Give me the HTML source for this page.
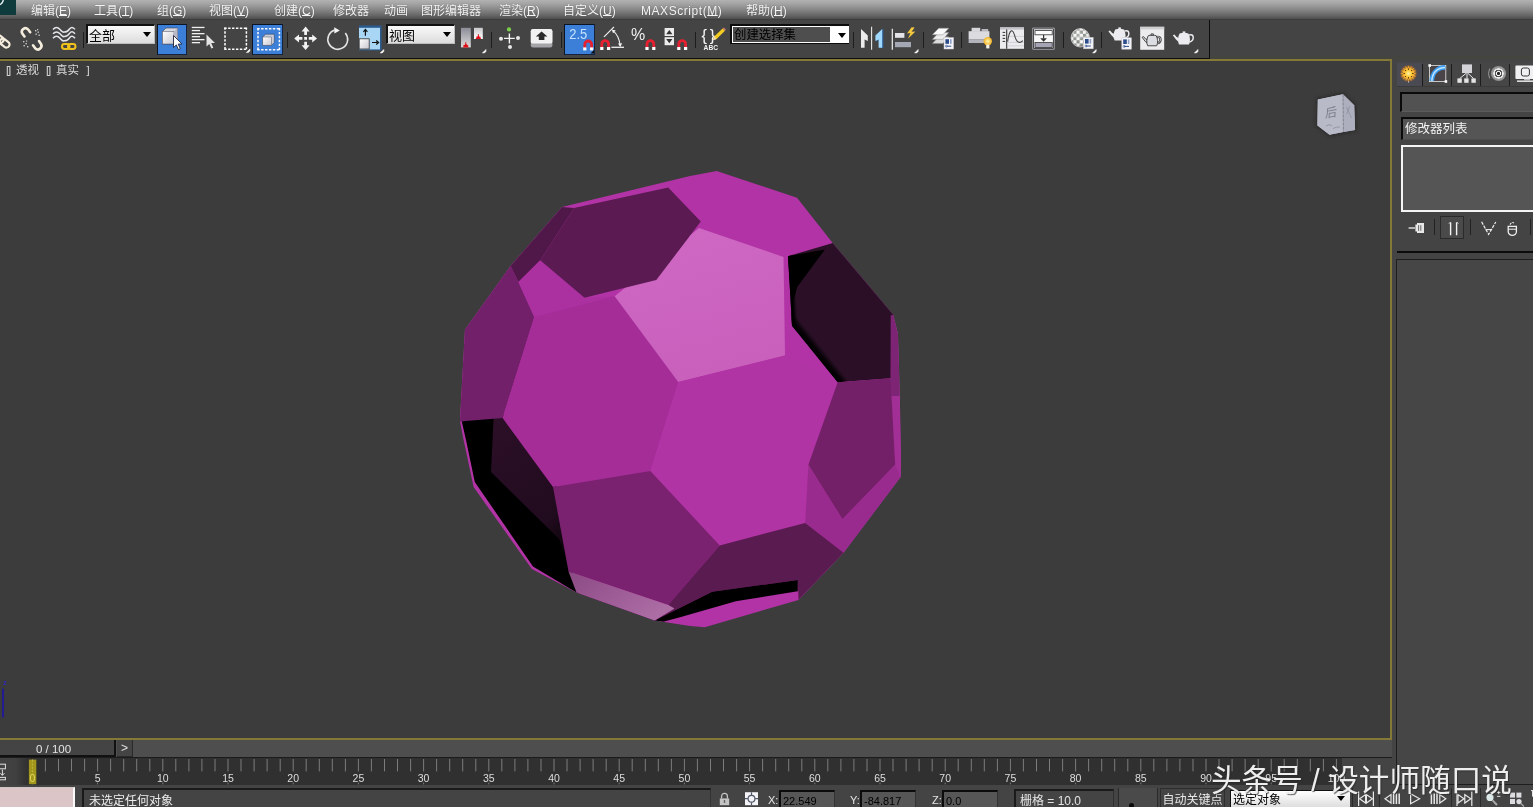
<!DOCTYPE html>
<html lang="zh-CN">
<head>
<meta charset="utf-8">
<title>3ds Max</title>
<style>
*{box-sizing:border-box;margin:0;padding:0}
html{width:1533px;height:807px;overflow:hidden;background:#444444}
body{width:1533px;height:807px;overflow:hidden;background:transparent;will-change:transform}
body{position:relative;font-family:"Liberation Sans","Noto Sans CJK SC",sans-serif;font-size:12px;color:#e6e6e6}
.abs{position:absolute}
#menubar{left:0;top:0;width:1533px;height:20px;background:linear-gradient(#b2b2b2 0%,#a2a2a2 22%,#858585 52%,#656565 82%,#4e4e4e 100%);border-bottom:1px solid #3c3c3c}
#menubar span{position:absolute;top:1px;line-height:21px;font-size:12px;color:#f4f4f4;white-space:nowrap;text-shadow:0 0 1px rgba(60,60,60,.6)}
#menubar u{text-decoration:underline;text-underline-offset:0px}
#logo{left:0;top:0;width:16px;height:15px;background:#0f3b3d;overflow:hidden}
#toolbar{left:0;top:20px;width:1210px;height:39px;background:#444444;border-right:1px solid #0e0e0e;border-bottom:1px solid #0e0e0e}
#tbline{left:1210px;top:56px;width:323px;height:3px;background:#454540}
#viewport{left:-2px;top:59px;width:1394px;height:681px;background:#3c3c3c;border:2px solid #847936}
.vplabel{left:0;top:62px;font-size:11.5px;line-height:16px;color:#d8d8d8;white-space:nowrap}
.vplabel span{position:absolute;top:0;white-space:nowrap}
.sep{position:absolute;width:1px;background:#1e1e1e;top:29px;height:24px}
.dd{position:absolute;height:20px;background:#f2f2f2;border-top:2px solid #111;border-left:2px solid #111;border-bottom:1px solid #bdbdbd;border-right:1px solid #bdbdbd;color:#000;font-size:13px;line-height:19px;padding-left:1px;white-space:nowrap;overflow:hidden}
.dd i{position:absolute;right:3px;top:6px;width:0;height:0;border-left:4px solid transparent;border-right:4px solid transparent;border-top:5px solid #000}
.bluebtn{position:absolute;background:#3c7fd8;border:1px solid #15233c;border-top-color:#0c1422;border-left-color:#0c1422}
svg{position:absolute;overflow:visible}
</style>
</head>
<body>
<!-- MENUBAR -->
<div id="menubar" class="abs">
<span style="left:31px">编辑(<u>E</u>)</span>
<span style="left:94px">工具(<u>T</u>)</span>
<span style="left:157px">组(<u>G</u>)</span>
<span style="left:209px">视图(<u>V</u>)</span>
<span style="left:274px">创建(<u>C</u>)</span>
<span style="left:333px">修改器</span>
<span style="left:384px">动画</span>
<span style="left:421px">图形编辑器</span>
<span style="left:499px">渲染(<u>R</u>)</span>
<span style="left:563px">自定义(<u>U</u>)</span>
<span style="left:641px;letter-spacing:.55px">MAXScript(<u>M</u>)</span>
<span style="left:746px">帮助(<u>H</u>)</span>
</div>
<div id="logo" class="abs"><svg width="16" height="15" viewBox="0 0 16 15" style="left:0;top:0"><path d="M-2 5 Q2.4 5 3.6 -1" fill="none" stroke="#e8f4f4" stroke-width="1.3"/></svg></div>
<!-- TOOLBAR -->
<div id="toolbar" class="abs"></div>
<div id="tbline" class="abs"></div>
<!--TOOLBAR-ICONS-->
<div class="sep" style="left:83px;top:32px;height:16px"></div>
<div class="sep" style="left:287px;top:32px;height:16px"></div>
<div class="sep" style="left:491px;top:32px;height:16px"></div>
<div class="sep" style="left:561px;top:32px;height:16px"></div>
<div class="sep" style="left:695px;top:32px;height:16px"></div>
<div class="sep" style="left:853px;top:32px;height:16px"></div>
<div class="sep" style="left:923px;top:32px;height:16px"></div>
<div class="sep" style="left:961px;top:32px;height:16px"></div>
<div class="sep" style="left:1063px;top:32px;height:16px"></div>
<div class="sep" style="left:1101px;top:32px;height:16px"></div>
<div class="dd" style="left:86px;top:24px;width:69px;background:linear-gradient(#fafafa,#dcdcdc)">全部<i></i></div>
<div class="dd" style="left:386px;top:24px;width:69px;background:linear-gradient(#fafafa,#dcdcdc)">视图<i></i></div>
<div class="abs" style="left:730px;top:24px;width:119px;height:20px;background:#fff;border:2px solid #0c0c0c;border-right-width:0;border-bottom-width:1px"></div>
<div class="abs" style="left:733px;top:27px;width:97px;height:15px;background:#4e4e4e;color:#000;font-size:12.4px;line-height:16px;padding-left:1px;white-space:nowrap">创建选择集</div>
<div class="abs" style="left:838px;top:33px;width:0;height:0;border-left:4px solid transparent;border-right:4px solid transparent;border-top:5px solid #000"></div>
<div class="bluebtn" style="left:157px;top:24px;width:30px;height:31px"></div>
<div class="bluebtn" style="left:252px;top:24px;width:31px;height:31px"></div>
<div class="bluebtn" style="left:564px;top:24px;width:31px;height:31px"></div>
<svg class="abs" style="left:0;top:0" width="1533" height="60" viewBox="0 0 1533 60">
<defs>
<linearGradient id="gcube" x1="0" y1="0" x2="1" y2="1"><stop offset="0" stop-color="#ffffff"/><stop offset="1" stop-color="#c8c8d0"/></linearGradient>
<linearGradient id="gbar" x1="0" y1="0" x2="0" y2="1"><stop offset="0" stop-color="#8c8c98"/><stop offset="1" stop-color="#dcdcdc"/></linearGradient>
<linearGradient id="gbar2" x1="0" y1="0" x2="0" y2="1"><stop offset="0" stop-color="#c8c8cc"/><stop offset="1" stop-color="#ffffff"/></linearGradient>
<radialGradient id="gsph" cx=".4" cy=".35" r=".7"><stop offset="0" stop-color="#fff" stop-opacity=".35"/><stop offset=".6" stop-color="#fff" stop-opacity="0"/><stop offset="1" stop-color="#202020" stop-opacity=".35"/></radialGradient><radialGradient id="gbulb"><stop offset="0" stop-color="#fff6b0"/><stop offset="1" stop-color="#f0b020"/></radialGradient>
<pattern id="chk" x="1.3" y="1.8" width="6.4" height="6.4" patternUnits="userSpaceOnUse"><rect width="6.4" height="6.4" fill="#f6f6f6"/><rect width="3.2" height="3.2" fill="#868c84"/><rect x="3.2" y="3.2" width="3.2" height="3.2" fill="#868c84"/></pattern>
</defs>
<g fill="none" stroke="#f4ecdc" stroke-width="2.2" stroke-linecap="round"><rect x="-6" y="35.6" width="10" height="6" rx="3" transform="rotate(38 -1 38.6)"/><rect x="-0.6" y="40" width="10.6" height="6.2" rx="3.1" transform="rotate(38 4.7 43.1)"/></g>
<g fill="none" stroke="#f4ecdc" stroke-width="2.6" stroke-linecap="round"><path d="M24.5 36.5 L22.3 33.6 A3.6 3.6 0 0 1 28 29.3 L30.2 32.2"/><path d="M39 41 L41 44 A3.6 3.6 0 0 1 35.3 48.3 L33 45.3"/></g>
<g fill="#c8c8c8"><rect x="35" y="30" width="1.4" height="1.4"/><rect x="37.5" y="31.5" width="1.4" height="1.4"/><rect x="35.5" y="33.5" width="1.4" height="1.4"/><rect x="38.5" y="34.5" width="1.4" height="1.4"/><rect x="37" y="29" width="1.2" height="1.2"/><rect x="23" y="41" width="1.4" height="1.4"/><rect x="25.5" y="43" width="1.4" height="1.4"/><rect x="23.5" y="45" width="1.4" height="1.4"/><rect x="27" y="46" width="1.4" height="1.4"/><rect x="26" y="40.5" width="1.2" height="1.2"/></g>
<path d="M53 29.400000000000002 Q56.5 25.6 60 29.400000000000002 T 64 32.0 Q67.5 32.2 69.5 29.0 Q72 25.6 75 29.400000000000002" fill="none" stroke="#e4e4ea" stroke-width="1.5"/>
<path d="M53 33.800000000000004 Q56.5 30.000000000000004 60 33.800000000000004 T 64 36.400000000000006 Q67.5 36.6 69.5 33.400000000000006 Q72 30.000000000000004 75 33.800000000000004" fill="none" stroke="#e4e4ea" stroke-width="1.5"/>
<path d="M53 38.2 Q56.5 34.4 60 38.2 T 64 40.800000000000004 Q67.5 41.0 69.5 37.800000000000004 Q72 34.4 75 38.2" fill="none" stroke="#e4e4ea" stroke-width="1.5"/>
<g fill="none" stroke="#f2c21c" stroke-width="2"><rect x="62" y="44" width="7.5" height="5" rx="2.4"/><rect x="68" y="44" width="7.5" height="5" rx="2.4"/></g>
<path d="M162.5 31.5 L166 28 L177.5 28 L177.5 40.5 L174 44 L162.5 44Z" fill="#d8d8e0" stroke="#404050" stroke-width=".6"/><rect x="162.5" y="31.5" width="11.5" height="12.5" fill="url(#gcube)" stroke="#505060" stroke-width=".5"/><path d="M174 31.5 L177.5 28 V40.5 L174 44Z" fill="#b8b8c4"/>
<path d="M173.5 35.5 L173.5 47.5 L176.3 44.9 L178.4 49.6 L180.3 48.7 L178.2 44.1 L182 44Z" fill="#fff" stroke="#202840" stroke-width=".9"/>
<rect x="191.8" y="26.8" width="12.7" height="1.3" fill="#f0f0f0"/>
<rect x="191.8" y="29.9" width="8.2" height="1.3" fill="#f0f0f0"/>
<rect x="191.8" y="33.0" width="12.7" height="1.3" fill="#f0f0f0"/>
<rect x="191.8" y="36.0" width="8.2" height="1.3" fill="#f0f0f0"/>
<rect x="191.8" y="39.0" width="12.7" height="1.3" fill="#f0f0f0"/>
<rect x="191.8" y="42.0" width="8.2" height="1.3" fill="#f0f0f0"/>
<path d="M206.5 34.5 L206.5 46.5 L209.3 43.9 L211.4 48.6 L213.3 47.7 L211.2 43.1 L215 43Z" fill="#e4e4e4"/>
<path d="M224.25 28.2 H247.15" stroke="#fff" stroke-width="1.5" stroke-dasharray="2.4 1.5" fill="none"/><path d="M224.25 49.2 H247.15" stroke="#fff" stroke-width="1.5" stroke-dasharray="2.4 1.5" fill="none"/><path d="M225 27.45 V49.95" stroke="#fff" stroke-width="1.5" stroke-dasharray="2.4 1.5" fill="none"/><path d="M246.4 27.45 V49.95" stroke="#fff" stroke-width="1.5" stroke-dasharray="2.4 1.5" fill="none"/>
<path d="M246.3 52.6 L249.9 49 L249.9 51 L248.3 52.6Z" fill="#fff" stroke="#fff" stroke-width=".5"/>
<path d="M257.25 28.8 H280.15" stroke="#fff" stroke-width="1.5" stroke-dasharray="2.4 1.5" fill="none"/><path d="M257.25 49.8 H280.15" stroke="#fff" stroke-width="1.5" stroke-dasharray="2.4 1.5" fill="none"/><path d="M258 28.05 V50.55" stroke="#fff" stroke-width="1.5" stroke-dasharray="2.4 1.5" fill="none"/><path d="M279.4 28.05 V50.55" stroke="#fff" stroke-width="1.5" stroke-dasharray="2.4 1.5" fill="none"/>
<path d="M262.8 37 L265.5 34.2 L274.3 34.2 L274.3 42.6 L271.6 45.2 L262.8 45.2Z" fill="#c8ccd8" stroke="#38445c" stroke-width=".6"/><rect x="262.8" y="37" width="8.8" height="8.2" fill="url(#gcube)" stroke="#505868" stroke-width=".5"/>
<g fill="#f2f2f2"><path d="M305.6 26.6 L309.6 31.4 L307 31.4 L307 35 L304.2 35 L304.2 31.4 L301.6 31.4Z"/><path d="M305.6 50 L309.6 45.2 L307 45.2 L307 41.8 L304.2 41.8 L304.2 45.2 L301.6 45.2Z"/><path d="M294.2 38.4 L299 34.4 L299 37 L302.4 37 L302.4 39.8 L299 39.8 L299 42.4Z"/><path d="M317 38.4 L312.2 34.4 L312.2 37 L308.8 37 L308.8 39.8 L312.2 39.8 L312.2 42.4Z"/><rect x="304.2" y="37" width="2.8" height="2.8"/></g>
<path d="M345.3 33 A9.9 9.9 0 1 1 334.6 30" fill="none" stroke="#e4e4e4" stroke-width="1.6"/><path d="M334.2 27.2 L339.8 30.4 L334.4 33.4Z" fill="#f4f4f4"/>
<rect x="359" y="25.4" width="22.6" height="25" fill="#2c5a8c"/><rect x="359" y="27.8" width="21" height="21.6" fill="#a8d6f4"/><rect x="359.2" y="38.8" width="10" height="10.2" fill="url(#gcube)" stroke="#333" stroke-width=".8"/>
<path d="M365.4 35.8 V30.4 M363.4 31.8 L365.4 29.4 L367.4 31.8" fill="none" stroke="#111" stroke-width="1.2"/><path d="M372 42.5 H377.6 M376.2 40.5 L378.6 42.5 L376.2 44.5" fill="none" stroke="#111" stroke-width="1.2"/>
<path d="M380.2 53.0 L383.8 49.4 L383.8 51.4 L382.2 53.0Z" fill="#fff" stroke="#fff" stroke-width=".5"/>
<rect x="461" y="27.8" width="9.8" height="19.6" fill="url(#gbar)"/><rect x="474" y="27.8" width="8.8" height="11.2" fill="url(#gbar2)"/>
<path d="M462.6 47.4 L465.8 43.4 L469 47.4Z" fill="#e01018"/><path d="M465.8 42.2 V47 M463.4 45.4 H468.2" stroke="#e01018" stroke-width="1"/><path d="M475.4 39 L478.4 35.4 L481.4 39Z" fill="#e01018"/><path d="M478.4 34.2 V38.6 M476.2 37.2 H480.6" stroke="#e01018" stroke-width="1"/>
<path d="M482.4 53.0 L486.0 49.4 L486.0 51.4 L484.4 53.0Z" fill="#fff" stroke="#fff" stroke-width=".5"/>
<path d="M509.4 33.4 V43.6 M504 38.4 H514.8" stroke="#f4f4f4" stroke-width="1.4"/><circle cx="509" cy="29.4" r="2.1" fill="#7ed04c"/><circle cx="501" cy="38.8" r="2" fill="#e8e8e8"/><circle cx="518" cy="38.1" r="2" fill="#e8e8e8"/><circle cx="510" cy="47" r="2" fill="#e8e8e8"/>
<rect x="530.8" y="29" width="21.6" height="18.4" rx="2.2" fill="#a4a4a8"/><rect x="530.8" y="29" width="21.6" height="14.6" rx="2.2" fill="#f2f2f2"/><path d="M541.6 31.4 L547.4 36.4 L544.4 36.4 L544.4 40 L538.8 40 L538.8 36.4 L535.8 36.4Z" fill="#2c2c2c"/>
<text x="569.2" y="38.8" font-family="Liberation Sans, sans-serif" font-size="14.4" fill="#c4e2ff" textLength="18" lengthAdjust="spacingAndGlyphs">2.5</text>
<path d="M584.8 47.9 V44.4 A3.4 3.4 0 0 1 591.6 44.4 V47.9" fill="none" stroke="#e62030" stroke-width="2.8"/>
<rect x="583.2" y="47.4" width="3.2" height="3" fill="#fff"/><rect x="590.0" y="47.4" width="3.2" height="3" fill="#fff"/>
<path d="M594 50 V53.4 H590.6Z" fill="#0a0a0a"/>
<path d="M601.8 47.5 V44.0 A3.4 3.4 0 0 1 608.6 44.0 V47.5" fill="none" stroke="#e62030" stroke-width="2.8"/>
<rect x="600.2" y="47.0" width="3.2" height="3" fill="#fff"/><rect x="607.0" y="47.0" width="3.2" height="3" fill="#fff"/>
<path d="M604 36.8 L614 26.8" stroke="#f0f0f0" stroke-width="1.2"/><path d="M611.4 47.3 H624" stroke="#f0f0f0" stroke-width="1.3"/><path d="M613 30.6 Q619.4 36 620.2 46" fill="none" stroke="#f0f0f0" stroke-width="1.1"/><path d="M611.8 29.6 L615.8 30.4 L613 33.2Z M620.3 47 L618 43.4 L622.2 43.2Z" fill="#f0f0f0"/>
<text x="631" y="40" font-family="Liberation Sans, sans-serif" font-size="16" fill="#f0f0f0">%</text>
<path d="M647.0 47.5 V44.0 A3.4 3.4 0 0 1 653.8 44.0 V47.5" fill="none" stroke="#e62030" stroke-width="2.8"/>
<rect x="645.4" y="47.0" width="3.2" height="3" fill="#fff"/><rect x="652.2" y="47.0" width="3.2" height="3" fill="#fff"/>
<rect x="664.6" y="28" width="9.4" height="8" fill="#ececec"/><rect x="664.6" y="37.2" width="9.4" height="8" fill="#ececec"/><path d="M666.2 34.2 L669.3 30 L672.4 34.2Z M666.2 39 L669.3 43.2 L672.4 39Z" fill="#333"/>
<path d="M678.8 47.5 V44.0 A3.4 3.4 0 0 1 685.6 44.0 V47.5" fill="none" stroke="#e62030" stroke-width="2.8"/>
<rect x="677.2" y="47.0" width="3.2" height="3" fill="#fff"/><rect x="684.0" y="47.0" width="3.2" height="3" fill="#fff"/>
<text x="701.4" y="40.6" font-family="Liberation Sans, sans-serif" font-size="16.5" fill="#f4f4f4">{</text><text x="709.8" y="40.6" font-family="Liberation Sans, sans-serif" font-size="16.5" fill="#f4f4f4">}</text>
<text x="703.6" y="49.9" font-family="Liberation Sans, sans-serif" font-size="6.6" font-weight="bold" fill="#f4f4f4" textLength="14.4" lengthAdjust="spacingAndGlyphs">ABC</text>
<path d="M713 40.2 L714.2 36.6 L722.6 28.4 L725 30.8 L716.6 39Z" fill="#f4cc20"/><path d="M713 40.2 L714.2 36.6 L716.6 39Z" fill="#f0e0c0"/><path d="M722.6 28.4 L725 30.8 L726 29.6 L723.8 27.4Z" fill="#c87868"/>
<path d="M861 29 L867.8 35.6 L867.8 41 L864.6 39.6 L864.6 47.8 L861 47.8Z" fill="#ececec"/><path d="M871.6 26.8 V49.8" stroke="#e8e8e8" stroke-width="1.1"/><path d="M883.4 28.2 L876.4 35 L876.4 41.4 L879.4 40 L879.4 48 L883.4 48Z" fill="#2c5c94"/><path d="M882.2 29 L875.4 35.6 L875.4 41 L878.6 39.6 L878.6 47.8 L882.2 47.8Z" fill="#a0d8fc"/>
<path d="M892.3 28.8 V49.8" stroke="#f0f0f0" stroke-width="1.2"/><rect x="895" y="33" width="9.4" height="4.8" fill="#e4e4e8"/><rect x="895" y="42" width="16" height="5.2" fill="#a4a8b4"/><path d="M911.6 27.2 L907 33.4 L910.4 33 L908 38.8 L915.4 31.4 L911.6 31.8 L914.6 27.6Z" fill="#f4c83c"/>
<path d="M914.6 53.0 L918.2 49.4 L918.2 51.4 L916.6 53.0Z" fill="#fff" stroke="#fff" stroke-width=".5"/>
<g stroke="#8a8a8a" stroke-width=".5"><path d="M938.7 36.8 H948.8 L942.9 43.6 H932.3Z" fill="#dcdcdc"/><path d="M938.7 32.6 H948.8 L942.9 39.4 H932.3Z" fill="#ececec"/><path d="M938.7 28.2 H948.8 L942.9 34.8 H932.3Z" fill="#fafafa"/></g>
<rect x="944" y="37.6" width="9.6" height="11.4" fill="#f4f4f8" stroke="#c8c8d0" stroke-width=".5"/><rect x="945.4" y="39.2" width="3.6" height="4.6" fill="#2c4c8c"/><rect x="950" y="39.2" width="1.6" height="4.6" fill="#8ca0c8"/><path d="M946.4 46.2 H951.2" stroke="#2c4c8c" stroke-width="1"/><circle cx="946.4" cy="46.2" r="1" fill="none" stroke="#2c4c8c" stroke-width=".6"/>
<rect x="971.6" y="27.8" width="8.6" height="4" fill="#d8d8dc"/><rect x="981.6" y="29" width="6.6" height="2.6" fill="#b8b8c0"/><rect x="968.6" y="31.2" width="20.8" height="8.4" fill="#dcdce0"/><rect x="968.6" y="39.6" width="20.8" height="3.4" fill="#b4b4bc"/>
<circle cx="987.8" cy="41.2" r="4.2" fill="url(#gbulb)"/><rect x="986.2" y="44.6" width="3.2" height="3.8" fill="#f4f0e4"/>
<rect x="1000" y="27.4" width="24" height="21.4" fill="#ececee"/><rect x="1000" y="27.4" width="24" height="2.2" fill="#c4c4c8"/><path d="M1006.7 29.6 V48.8" stroke="#333" stroke-width="1.1"/><path d="M1002.6 32.4 h2.6 M1002.6 35.4 h2.6 M1002.6 38.4 h2.6 M1002.6 41.4 h2.6" stroke="#333" stroke-width="1"/><path d="M1007 36.4 H1024 M1007 42.4 H1024 M1007 45.8 H1024" stroke="#c0c0c8" stroke-width=".6"/><path d="M1007.6 41.6 C1009.4 29 1012.6 28 1014.6 35.4 C1016.4 42.6 1019.6 44 1022.8 40.6" fill="none" stroke="#444" stroke-width="1.1"/>
<rect x="1032.6" y="27.8" width="21.8" height="21.6" fill="#fafafa"/><rect x="1033.6" y="28.8" width="19.8" height="19.6" fill="#f8f8f8" stroke="#2c2c34" stroke-width=".9"/><rect x="1035" y="30.6" width="17.2" height="4.2" fill="#fdfdfd" stroke="#333" stroke-width=".8"/><rect x="1035" y="42.6" width="17.2" height="5" fill="#a4a4b4" stroke="#333" stroke-width=".8"/><path d="M1043.6 34.8 V38.6" stroke="#333" stroke-width="1.2"/><path d="M1040.2 38.2 H1047 L1043.6 41.8Z" fill="#333"/>
<circle cx="1080.3" cy="37.8" r="9.2" fill="url(#chk)" stroke="#d8d8d8" stroke-width=".8"/><circle cx="1080.3" cy="37.8" r="9.2" fill="url(#gsph)"/>
<rect x="1083.6" y="37.4" width="9.6" height="11.4" fill="#f4f4f8" stroke="#c8c8d0" stroke-width=".5"/><rect x="1085.0" y="39.0" width="3.6" height="4.6" fill="#2c4c8c"/><rect x="1089.6" y="39.0" width="1.6" height="4.6" fill="#8ca0c8"/><path d="M1086.0 46.0 H1090.8" stroke="#2c4c8c" stroke-width="1"/><circle cx="1086.0" cy="46.0" r="1" fill="none" stroke="#2c4c8c" stroke-width=".6"/>
<path d="M1092.6 53.0 L1096.1999999999998 49.4 L1096.1999999999998 51.4 L1094.6 53.0Z" fill="#fff" stroke="#fff" stroke-width=".5"/>
<g transform="translate(1119.6 34.4) scale(1.0)"><path d="M5 -3.4 C10 -5.4 11 1.8 5.6 3.6" fill="none" stroke="#ececf0" stroke-width="1.5"/><g fill="#ececf0" ><path d="M-5.4 3.6 L-8 1 L-11.2 -3.2 L-9.6 -4 L-7.4 -1.4 L-5.6 -0.6Z"/><path d="M-4.4 -5 C-6.2 -2 -6.6 3 -5 6.2 L5 6.2 C6.6 3 6.2 -2 4.4 -5 C2 -5.8 -2 -5.8 -4.4 -5Z"/><path d="M-1.3 -5.4 V-7 H1.3 V-5.4Z"/></g></g>
<rect x="1121.8" y="37.8" width="9.6" height="11.4" fill="#f4f4f8" stroke="#c8c8d0" stroke-width=".5"/><rect x="1123.2" y="39.4" width="3.6" height="4.6" fill="#2c4c8c"/><rect x="1127.8" y="39.4" width="1.6" height="4.6" fill="#8ca0c8"/><path d="M1124.2 46.4 H1129.0" stroke="#2c4c8c" stroke-width="1"/><circle cx="1124.2" cy="46.4" r="1" fill="none" stroke="#2c4c8c" stroke-width=".6"/>
<rect x="1140.2" y="26.8" width="24" height="23" fill="#ececee"/><rect x="1140.2" y="26.8" width="24" height="2.6" fill="#cfcfd2"/>
<g transform="translate(1152.2 40.2) scale(0.9)"><path d="M5 -3.4 C10 -5.4 11 1.8 5.6 3.6" fill="none" stroke="#3a3a3a" stroke-width="2.6"/><path d="M5 -3.4 C10 -5.4 11 1.8 5.6 3.6" fill="none" stroke="#dcdde2" stroke-width="1"/><g fill="#dcdde2" stroke="#3a3a3a" stroke-width="1.0" stroke-linejoin="round"><path d="M-5.4 3.6 L-8 1 L-11.2 -3.2 L-9.6 -4 L-7.4 -1.4 L-5.6 -0.6Z"/><path d="M-4.4 -5 C-6.2 -2 -6.6 3 -5 6.2 L5 6.2 C6.6 3 6.2 -2 4.4 -5 C2 -5.8 -2 -5.8 -4.4 -5Z"/><path d="M-1.3 -5.4 V-7 H1.3 V-5.4Z"/></g></g>
<g transform="translate(1184 38.4) scale(1.0)"><path d="M5 -3.4 C10 -5.4 11 1.8 5.6 3.6" fill="none" stroke="#ececf0" stroke-width="1.5"/><g fill="#ececf0" ><path d="M-5.4 3.6 L-8 1 L-11.2 -3.2 L-9.6 -4 L-7.4 -1.4 L-5.6 -0.6Z"/><path d="M-4.4 -5 C-6.2 -2 -6.6 3 -5 6.2 L5 6.2 C6.6 3 6.2 -2 4.4 -5 C2 -5.8 -2 -5.8 -4.4 -5Z"/><path d="M-1.3 -5.4 V-7 H1.3 V-5.4Z"/></g></g>
<path d="M1194.4 53.0 L1198.0 49.4 L1198.0 51.4 L1196.4 53.0Z" fill="#fff" stroke="#fff" stroke-width=".5"/>
</svg>
<!--/TOOLBAR-ICONS-->
<!-- VIEWPORT -->
<div id="viewport" class="abs"></div>
<div class="abs vplabel"><span style="left:6px;letter-spacing:-1.2px">[]</span><span style="left:16px">透视</span><span style="left:46px;letter-spacing:-1.2px">[]</span><span style="left:56px">真实</span><span style="left:86.5px">]</span></div>
<!--POLY-->
<svg class="abs" style="left:0;top:0" width="1533" height="807" viewBox="0 0 1533 807" shape-rendering="geometricPrecision">
<defs><linearGradient id="gpent" x1="0" y1="0" x2="0.3" y2="1"><stop offset="0" stop-color="#cf69c4"/><stop offset="1" stop-color="#c860bc"/></linearGradient><linearGradient id="ggrey" x1="0" y1="0" x2="1" y2="0.6"><stop offset="0" stop-color="#8c4a84"/><stop offset="1" stop-color="#ac6ca4"/></linearGradient><linearGradient id="gdk" x1="0.2" y1="0" x2="0.6" y2="1"><stop offset="0" stop-color="#2b0f27"/><stop offset="0.75" stop-color="#210b1e"/><stop offset="1" stop-color="#0a0309"/></linearGradient><linearGradient id="gdr" x1="0" y1="0.6" x2="0.35" y2="0.35"><stop offset="0" stop-color="#000"/><stop offset="0.35" stop-color="#1a0818"/><stop offset="1" stop-color="#2b0f27"/></linearGradient><linearGradient id="gband1" gradientUnits="userSpaceOnUse" x1="814.8" y1="354" x2="822.2" y2="348"><stop offset="0" stop-color="#000"/><stop offset="0.45" stop-color="#000" stop-opacity=".85"/><stop offset="1" stop-color="#000" stop-opacity="0"/></linearGradient><linearGradient id="gband2" gradientUnits="userSpaceOnUse" x1="789.5" y1="300" x2="796.5" y2="299.6"><stop offset="0" stop-color="#000"/><stop offset="0.5" stop-color="#000" stop-opacity=".8"/><stop offset="1" stop-color="#000" stop-opacity="0"/></linearGradient><clipPath id="csil"><polygon points="716.7,171.0 797.0,197.7 833.7,244.3 893.2,314.7 898.0,333.7 899.8,395.0 901.0,460.0 900.7,477.0 843.6,552.8 798.5,600.0 704.8,627.2 690.0,626.0 654.6,620.5 576.5,592.5 531.8,569.0 473.6,487.0 463.6,440.0 459.9,421.0 464.9,329.8 471.8,320.0 510.5,266.0 562.0,207.0 690.0,175.9"/></clipPath></defs>
<polygon points="716.7,171.0 797.0,197.7 833.7,244.3 893.2,314.7 898.0,333.7 899.8,395.0 901.0,460.0 900.7,477.0 843.6,552.8 798.5,600.0 704.8,627.2 690.0,626.0 654.6,620.5 576.5,592.5 531.8,569.0 473.6,487.0 463.6,440.0 459.9,421.0 464.9,329.8 471.8,320.0 510.5,266.0 562.0,207.0 690.0,175.9" fill="#b233a6" />
<g clip-path="url(#csil)">
<polygon points="461.0,418.0 505.0,415.0 556.0,485.0 572.0,572.0 580.0,593.5 576.5,592.5 533.0,566.5 474.8,482.0 466.0,440.0" fill="#000" />
<polygon points="493.6,418.0 505.0,415.0 556.0,485.0 571.0,573.0 559.0,539.0 491.0,472.0" fill="url(#gdk)" />
<polygon points="562.0,207.0 574.0,208.0 540.2,260.2 518.4,282.0 510.5,266.0" fill="#4f1848" />
<polygon points="510.5,266.0 518.4,282.0 534.3,316.9 502.6,418.0 459.9,421.4 464.9,329.8 471.8,320.0" fill="#722069" />
<polygon points="518.4,282.0 540.2,260.2 584.5,297.8 614.7,296.2 534.3,316.9" fill="#ab30a0" />
<polygon points="534.3,316.9 614.7,296.2 678.3,382.0 650.3,471.0 553.0,487.0 502.6,418.0" fill="#a52d98" />
<polygon points="699.0,228.0 783.5,257.0 785.0,355.5 678.3,382.0 614.7,296.2" fill="url(#gpent)" />
<polygon points="574.0,208.0 668.2,187.4 700.8,221.5 656.3,280.0 584.5,297.8 540.2,260.2" fill="#5b1b52" />
<polygon points="678.3,382.0 785.0,355.5 837.7,382.3 808.4,464.8 805.2,523.0 719.7,545.4 650.3,471.0" fill="#b034a4" />
<polygon points="889.0,310.0 893.2,314.7 898.0,333.7 899.8,396.0 890.6,396.0 890.6,312.0" fill="#7e2475" />
<polygon points="890.6,378.3 890.6,396.0 899.8,396.0 901.0,460.0 900.7,477.0 895.2,464.8" fill="#a22f96" />
<polygon points="788.0,256.2 834.6,242.6 895.4,314.0 890.8,315.5 890.6,378.3 837.7,382.3 792.0,325.8" fill="#2b0f27" />
<polygon points="788.0,256.2 834.6,242.6 895.4,314.0 890.8,315.5 890.6,378.3 837.7,382.3 792.0,325.8" fill="url(#gband1)" />
<polygon points="788.0,256.2 834.6,242.6 895.4,314.0 890.8,315.5 890.6,378.3 837.7,382.3 792.0,325.8" fill="url(#gband2)" />
<polygon points="788.0,256.2 825.0,249.4 797.2,287.0 793.6,300.0 793.2,326.0" fill="#000" />
<polygon points="837.7,382.3 890.6,378.3 895.2,464.8 842.4,519.3 808.4,464.8" fill="#732068" />
<polygon points="808.4,464.8 842.4,519.3 895.2,464.8 900.7,477.0 843.6,552.8 805.2,523.0" fill="#9a2b8e" />
<polygon points="553.0,487.0 650.3,471.0 719.7,545.4 668.2,605.0 568.5,571.4" fill="#7a2170" />
<polygon points="719.7,545.4 805.2,523.0 843.6,552.8 798.5,600.0 797.8,580.0 712.2,591.7 654.6,620.5 674.4,608.6 668.2,605.0" fill="#5a1b51" />
<polygon points="654.6,620.5 712.2,591.7 797.8,580.0 797.8,591.2 735.8,601.2 680.0,617.3 663.0,621.8" fill="#000" />
<polygon points="568.5,571.4 668.2,605.0 674.4,608.6 654.6,620.5 576.5,592.5" fill="url(#ggrey)" />
</g>
</svg>
<!--/POLY-->
<!--VIEWCUBE-->
<svg class="abs" style="left:0;top:0" width="1533" height="160" viewBox="0 0 1533 160">
<defs><filter id="vb" x="-20%" y="-20%" width="140%" height="140%"><feGaussianBlur stdDeviation="1.6"/></filter></defs><path d="M1316 98 L1343.4 92 L1356.4 104.4 L1357.2 131.4 L1329.5 137 L1315.6 126.6Z" fill="#2c2c2c" opacity=".75" filter="url(#vb)"/>
<path d="M1317.8 99.5 L1343 94.3 L1354.2 105.2 L1355.1 129.9 L1343.4 132 L1329.5 134.7 L1317.4 125.6Z" fill="#b2b3c2"/>
<path d="M1317.8 99.5 L1343 94.3 L1343.4 132 L1329.5 134.7 L1317.4 125.6Z" fill="#b9bac8"/>
<path d="M1343 94.3 L1354.2 105.2 L1355.1 129.9 L1343.4 132Z" fill="#adaebe"/>
<path d="M1343 94.6 L1343.4 131.6" stroke="#6c6c78" stroke-width=".7" stroke-dasharray="3 1"/>
<g transform="translate(1325 118) rotate(-10) skewX(-12)"><text x="0" y="0" font-family="Noto Sans CJK SC, sans-serif" font-size="12" fill="#7c7c8a">后</text></g>
<path d="M1346.5 107 L1351.5 118 M1350 106 L1346.6 114" stroke="#8c8c9a" stroke-width=".7"/>
<path d="M1326 126 q3 -2.4 6 -0.4 M1333 128.6 q3 -2 7 -1.6" stroke="#8e8e9c" stroke-width=".8" fill="none"/>
</svg>
<svg class="abs" style="left:0;top:670px" width="40" height="60" viewBox="0 670 40 60"><path d="M3 688.6 V717.6" stroke="#1c14a8" stroke-width="1.6"/><text x="3" y="685.2" font-family="Liberation Sans, sans-serif" font-size="7.5" fill="#2a24d8">z</text></svg>
<!--/VIEWCUBE-->
<!--RIGHTPANEL-->
<div class="abs" style="left:1397px;top:62px;width:136px;height:25px;background:#464646;border-bottom:1px solid #3a3a3a"></div>
<div class="abs" style="left:1397px;top:63px;width:25px;height:23px;background:#4a4a52"></div>
<div class="abs" style="left:1422px;top:64px;width:1px;height:22px;background:#1c1c1c"></div>
<div class="abs" style="left:1451px;top:64px;width:1px;height:22px;background:#1c1c1c"></div>
<div class="abs" style="left:1480px;top:64px;width:1px;height:22px;background:#1c1c1c"></div>
<div class="abs" style="left:1509px;top:64px;width:1px;height:22px;background:#1c1c1c"></div>
<div class="abs" style="left:1400px;top:92px;width:140px;height:20px;background:#525252;border-top:2px solid #0a0a0a;border-left:2px solid #0a0a0a;border-bottom:1px solid #5c5c5c"></div>
<div class="abs" style="left:1401px;top:117px;width:140px;height:23px;background:#555555;border-top:2px solid #0a0a0a;border-left:2px solid #0a0a0a;border-bottom:1px solid #4c4c4c;color:#f2f2f2;font-size:12.5px;line-height:21px;padding-left:2px;white-space:nowrap">修改器列表</div>
<div class="abs" style="left:1401px;top:145px;width:140px;height:67px;background:#555555;border:2px solid #f4f4f4"></div>
<div class="abs" style="left:1434px;top:219px;width:1px;height:16px;background:#222"></div>
<div class="abs" style="left:1470px;top:219px;width:1px;height:16px;background:#222"></div>
<div class="abs" style="left:1530px;top:219px;width:1px;height:16px;background:#222"></div>
<div class="abs" style="left:1440px;top:216px;width:24px;height:23px;background:#4a4a4a;border:1px solid #2a2a2a"></div>
<div class="abs" style="left:1397px;top:251px;width:136px;height:2px;background:#0c0c0c"></div>
<div class="abs" style="left:1396px;top:259px;width:140px;height:526px;background:#464646;border:1px solid #1e1e1e"></div>
<svg class="abs" style="left:0;top:0" width="1533" height="260" viewBox="0 0 1533 260">
<defs><radialGradient id="gsun"><stop offset="0" stop-color="#fff2a0"/><stop offset=".45" stop-color="#f8c030"/><stop offset=".8" stop-color="#e08820" stop-opacity=".85"/><stop offset="1" stop-color="#a05820" stop-opacity="0"/></radialGradient>
<radialGradient id="gsun2"><stop offset="0" stop-color="#fff4a8"/><stop offset=".4" stop-color="#fcc838"/><stop offset="1" stop-color="#e88c20"/></radialGradient><radialGradient id="gmot"><stop offset="0" stop-color="#222"/><stop offset=".18" stop-color="#222"/><stop offset=".2" stop-color="#f4f4f4"/><stop offset=".34" stop-color="#f4f4f4"/><stop offset=".36" stop-color="#555"/><stop offset=".5" stop-color="#555"/><stop offset=".52" stop-color="#f0f0f0"/><stop offset=".66" stop-color="#e0e0e0"/><stop offset=".7" stop-color="#a0a0a0"/><stop offset="1" stop-color="#8a8a8a"/></radialGradient></defs>
<circle cx="1408.5" cy="73.5" r="9" fill="url(#gsun)" opacity=".55"/><polygon points="1408.5,65.3 1409.5,68.4 1411.6,65.9 1411.4,69.2 1414.3,67.7 1412.8,70.6 1416.1,70.4 1413.6,72.5 1416.7,73.5 1413.6,74.5 1416.1,76.6 1412.8,76.4 1414.3,79.3 1411.4,77.8 1411.6,81.1 1409.5,78.6 1408.5,81.7 1407.5,78.6 1405.4,81.1 1405.6,77.8 1402.7,79.3 1404.2,76.4 1400.9,76.6 1403.4,74.5 1400.3,73.5 1403.4,72.5 1400.9,70.4 1404.2,70.6 1402.7,67.7 1405.6,69.2 1405.4,65.9 1407.5,68.4" fill="url(#gsun2)"/>
<g fill="#6a4410"><rect x="1408" y="68.4" width="1" height="1.6"/><rect x="1408" y="77" width="1" height="1.6"/><rect x="1403.4" y="73" width="1.6" height="1"/><rect x="1412" y="73" width="1.6" height="1"/><rect x="1405" y="70" width="1.1" height="1.1"/><rect x="1411" y="70" width="1.1" height="1.1"/><rect x="1405" y="76" width="1.1" height="1.1"/><rect x="1411" y="76" width="1.1" height="1.1"/></g>
<path d="M1408.5 81 V82.8" stroke="#c8c8c8" stroke-width=".7"/>
<rect x="1429.6" y="65.4" width="16.2" height="16.2" fill="#4a4448" stroke="#e8e8e8" stroke-width=".8"/>
<path d="M1431.8 81 C1432.2 73 1437 67.6 1445.2 67.4" fill="none" stroke="#3c9cf0" stroke-width="4.6"/><path d="M1431.8 81 C1432.2 73 1437 67.6 1445.2 67.4" fill="none" stroke="#bfe4ff" stroke-width="1.5"/>
<rect x="1428.4" y="64.2" width="2.6" height="2.6" fill="#fff"/><rect x="1444.6" y="80.2" width="2.6" height="2.6" fill="#fff"/>
<rect x="1462" y="64.4" width="10" height="8.6" fill="#d4d4d8"/><path d="M1467 73 V78.5 M1466 73.4 L1459.6 78.6 M1468 73.4 L1473.6 78.6" stroke="#ececec" stroke-width="1"/><rect x="1457.4" y="78.4" width="4.4" height="4.4" fill="#e4e4e4"/><rect x="1464.2" y="78.4" width="4.4" height="4.4" fill="#e4e4e4"/><rect x="1471.4" y="78.4" width="4.4" height="4.4" fill="#e4e4e4"/>
<circle cx="1498.5" cy="73.5" r="7.6" fill="url(#gmot)"/><path d="M1489.6 68.6 Q1487.4 73.5 1489.6 78.4" fill="none" stroke="#a0a0a0" stroke-width=".9"/>
<rect x="1515.4" y="65.4" width="22" height="13.6" rx="1" fill="#f0f0f2"/><rect x="1521.4" y="68" width="8" height="8" rx="2" fill="none" stroke="#333" stroke-width="1"/><rect x="1517" y="80.4" width="20" height="1.6" fill="#dcdcdc"/><rect x="1524" y="79" width="6" height="1.6" fill="#bcbcbc"/>
<path d="M1408.6 228 H1415" stroke="#f0f0f0" stroke-width="1.3"/><path d="M1415.4 224.4 H1417 V223 H1424 V233 H1417 V231.6 H1415.4Z" fill="#e8e8e8"/><path d="M1418.6 225.2 V230.8 M1420.8 225.2 V230.8" stroke="#555" stroke-width=".9"/>
<path d="M1450.6 222.6 V235.2 M1456.6 222.6 V235.2" stroke="#f4f4f4" stroke-width="1.4"/><path d="M1449 223.6 L1450.6 222 M1458.2 223.6 L1456.6 222" stroke="#f4f4f4" stroke-width="1"/>
<path d="M1481.6 221.8 L1488.6 234.4 L1495.8 222" fill="none" stroke="#f0f0f0" stroke-width="1.2" stroke-dasharray="3.2 1.2"/><path d="M1485.6 229.6 H1491.6" stroke="#f0f0f0" stroke-width="1.1"/>
<path d="M1508.2 226.4 H1516.4 V231.6 A4.1 3.8 0 0 1 1508.2 231.6Z" fill="none" stroke="#f0f0f0" stroke-width="1.3"/><path d="M1508 229.2 H1516.6" stroke="#f0f0f0" stroke-width="1"/><path d="M1510 224.6 Q1512.4 220.8 1514.8 223.8" fill="none" stroke="#f0f0f0" stroke-width="1.1" stroke-dasharray="2 1"/>
</svg>
<!--/RIGHTPANEL-->
<!--BOTTOM-->
<div class="abs" style="left:0;top:740px;width:1392px;height:18px;background:#4e4e4e"></div>
<div class="abs" style="left:-2px;top:740px;width:118px;height:17px;background:#444;border-right:2px solid #111;border-bottom:2px solid #111;color:#e4e4e4;font-size:11.5px;line-height:19px;text-align:center;padding-right:5px">0 / 100</div>
<div class="abs" style="left:117px;top:740px;width:16px;height:17px;background:#444;border-right:1px solid #2a2a2a;border-bottom:1px solid #2a2a2a;color:#e0e0e0;font-size:12px;line-height:16px;text-align:center">&gt;</div>
<div class="abs" style="left:0;top:757px;width:1392px;height:28px;background:#303030;border-top:1px solid #1c1c1c"></div>
<div class="abs" style="left:0;top:758px;width:28px;height:27px;background:linear-gradient(90deg,#424242 0,#404040 55%,#303030 100%)"></div>
<div class="abs" style="left:1342px;top:758px;width:50px;height:27px;background:#444"></div>
<svg class="abs" style="left:0;top:757px" width="1400" height="30" viewBox="0 757 1400 30">
<path d="M32.4 759 V771.4 M32.4 782.6 V784.4 M45.4 759 V771.4 M58.5 759 V771.4 M71.5 759 V771.4 M84.6 759 V771.4 M97.6 759 V771.4 M97.6 782.6 V784.4 M110.6 759 V771.4 M123.7 759 V771.4 M136.7 759 V771.4 M149.8 759 V771.4 M162.8 759 V771.4 M162.8 782.6 V784.4 M175.8 759 V771.4 M188.9 759 V771.4 M201.9 759 V771.4 M215.0 759 V771.4 M228.0 759 V771.4 M228.0 782.6 V784.4 M241.0 759 V771.4 M254.1 759 V771.4 M267.1 759 V771.4 M280.2 759 V771.4 M293.2 759 V771.4 M293.2 782.6 V784.4 M306.2 759 V771.4 M319.3 759 V771.4 M332.3 759 V771.4 M345.4 759 V771.4 M358.4 759 V771.4 M358.4 782.6 V784.4 M371.4 759 V771.4 M384.5 759 V771.4 M397.5 759 V771.4 M410.6 759 V771.4 M423.6 759 V771.4 M423.6 782.6 V784.4 M436.6 759 V771.4 M449.7 759 V771.4 M462.7 759 V771.4 M475.8 759 V771.4 M488.8 759 V771.4 M488.8 782.6 V784.4 M501.8 759 V771.4 M514.9 759 V771.4 M527.9 759 V771.4 M541.0 759 V771.4 M554.0 759 V771.4 M554.0 782.6 V784.4 M567.0 759 V771.4 M580.1 759 V771.4 M593.1 759 V771.4 M606.2 759 V771.4 M619.2 759 V771.4 M619.2 782.6 V784.4 M632.2 759 V771.4 M645.3 759 V771.4 M658.3 759 V771.4 M671.4 759 V771.4 M684.4 759 V771.4 M684.4 782.6 V784.4 M697.4 759 V771.4 M710.5 759 V771.4 M723.5 759 V771.4 M736.6 759 V771.4 M749.6 759 V771.4 M749.6 782.6 V784.4 M762.6 759 V771.4 M775.7 759 V771.4 M788.7 759 V771.4 M801.8 759 V771.4 M814.8 759 V771.4 M814.8 782.6 V784.4 M827.8 759 V771.4 M840.9 759 V771.4 M853.9 759 V771.4 M867.0 759 V771.4 M880.0 759 V771.4 M880.0 782.6 V784.4 M893.0 759 V771.4 M906.1 759 V771.4 M919.1 759 V771.4 M932.2 759 V771.4 M945.2 759 V771.4 M945.2 782.6 V784.4 M958.2 759 V771.4 M971.3 759 V771.4 M984.3 759 V771.4 M997.4 759 V771.4 M1010.4 759 V771.4 M1010.4 782.6 V784.4 M1023.4 759 V771.4 M1036.5 759 V771.4 M1049.5 759 V771.4 M1062.6 759 V771.4 M1075.6 759 V771.4 M1075.6 782.6 V784.4 M1088.6 759 V771.4 M1101.7 759 V771.4 M1114.7 759 V771.4 M1127.8 759 V771.4 M1140.8 759 V771.4 M1140.8 782.6 V784.4 M1153.8 759 V771.4 M1166.9 759 V771.4 M1179.9 759 V771.4 M1193.0 759 V771.4 M1206.0 759 V771.4 M1206.0 782.6 V784.4 M1219.0 759 V771.4 M1232.1 759 V771.4 M1245.1 759 V771.4 M1258.2 759 V771.4 M1271.2 759 V771.4 M1271.2 782.6 V784.4 M1284.2 759 V771.4 M1297.3 759 V771.4 M1310.3 759 V771.4 M1323.4 759 V771.4 M1336.4 759 V771.4 M1336.4 782.6 V784.4" stroke="#7c7c7c" stroke-width="1" fill="none"/>
<rect x="28.9" y="759.6" width="7.4" height="24.6" fill="#a2961c"/><path d="M32.4 760 V774" stroke="#c4b838" stroke-width="1" stroke-dasharray="2 1.4"/>
<text x="32.4" y="781.8" text-anchor="middle" font-family="Liberation Sans, sans-serif" font-size="10.5" fill="#e0d860">0</text>
<text x="97.6" y="781.8" text-anchor="middle" font-family="Liberation Sans, sans-serif" font-size="10.5" fill="#dedede">5</text>
<text x="162.8" y="781.8" text-anchor="middle" font-family="Liberation Sans, sans-serif" font-size="10.5" fill="#dedede">10</text>
<text x="228.0" y="781.8" text-anchor="middle" font-family="Liberation Sans, sans-serif" font-size="10.5" fill="#dedede">15</text>
<text x="293.2" y="781.8" text-anchor="middle" font-family="Liberation Sans, sans-serif" font-size="10.5" fill="#dedede">20</text>
<text x="358.4" y="781.8" text-anchor="middle" font-family="Liberation Sans, sans-serif" font-size="10.5" fill="#dedede">25</text>
<text x="423.6" y="781.8" text-anchor="middle" font-family="Liberation Sans, sans-serif" font-size="10.5" fill="#dedede">30</text>
<text x="488.8" y="781.8" text-anchor="middle" font-family="Liberation Sans, sans-serif" font-size="10.5" fill="#dedede">35</text>
<text x="554.0" y="781.8" text-anchor="middle" font-family="Liberation Sans, sans-serif" font-size="10.5" fill="#dedede">40</text>
<text x="619.2" y="781.8" text-anchor="middle" font-family="Liberation Sans, sans-serif" font-size="10.5" fill="#dedede">45</text>
<text x="684.4" y="781.8" text-anchor="middle" font-family="Liberation Sans, sans-serif" font-size="10.5" fill="#dedede">50</text>
<text x="749.6" y="781.8" text-anchor="middle" font-family="Liberation Sans, sans-serif" font-size="10.5" fill="#dedede">55</text>
<text x="814.8" y="781.8" text-anchor="middle" font-family="Liberation Sans, sans-serif" font-size="10.5" fill="#dedede">60</text>
<text x="880.0" y="781.8" text-anchor="middle" font-family="Liberation Sans, sans-serif" font-size="10.5" fill="#dedede">65</text>
<text x="945.2" y="781.8" text-anchor="middle" font-family="Liberation Sans, sans-serif" font-size="10.5" fill="#dedede">70</text>
<text x="1010.4" y="781.8" text-anchor="middle" font-family="Liberation Sans, sans-serif" font-size="10.5" fill="#dedede">75</text>
<text x="1075.6" y="781.8" text-anchor="middle" font-family="Liberation Sans, sans-serif" font-size="10.5" fill="#dedede">80</text>
<text x="1140.8" y="781.8" text-anchor="middle" font-family="Liberation Sans, sans-serif" font-size="10.5" fill="#dedede">85</text>
<text x="1206.0" y="781.8" text-anchor="middle" font-family="Liberation Sans, sans-serif" font-size="10.5" fill="#dedede">90</text>
<text x="1271.2" y="781.8" text-anchor="middle" font-family="Liberation Sans, sans-serif" font-size="10.5" fill="#dedede">95</text>
<text x="1336.4" y="781.8" text-anchor="middle" font-family="Liberation Sans, sans-serif" font-size="10.5" fill="#dedede">100</text>
<g stroke="#e0e0e0" stroke-width="1" fill="none"><rect x="-1" y="764.2" width="6.4" height="4.6"/><path d="M2.4 769.6 V775 M0.4 773.2 L2.4 775.4 L4.4 773.2"/><rect x="-1" y="777.4" width="6.4" height="2.4"/></g>
</svg>
<div class="abs" style="left:0;top:785px;width:1533px;height:22px;background:#444"></div>
<div class="abs" style="left:-2px;top:787px;width:77px;height:22px;background:#dcc5c6;border-top:1px solid #cfc6c6;border-right:2px solid #fafafa"></div>
<div class="abs" style="left:82px;top:788px;width:629px;height:22px;background:#444;border-top:2px solid #1a1a1a;border-left:2px solid #1a1a1a;border-right:1px solid #333;color:#ececec;font-size:12px;line-height:23px;padding-left:5px;white-space:nowrap">未选定任何对象</div>
<div class="abs" style="left:768px;top:792px;font-size:11px;line-height:16px;color:#e4e4e4;white-space:nowrap">X:</div>
<div class="abs" style="left:779px;top:790px;width:56px;height:20px;background:#565656;border-top:2px solid #0c0c0c;border-left:2px solid #0c0c0c;border-right:1px solid #333;color:#000;font-size:11px;line-height:18px;padding-left:2px;white-space:nowrap">22.549</div>
<div class="abs" style="left:850px;top:792px;font-size:11px;line-height:16px;color:#e4e4e4;white-space:nowrap">Y:</div>
<div class="abs" style="left:860px;top:790px;width:56px;height:20px;background:#565656;border-top:2px solid #0c0c0c;border-left:2px solid #0c0c0c;border-right:1px solid #333;color:#000;font-size:11px;line-height:18px;padding-left:2px;white-space:nowrap">-84.817</div>
<div class="abs" style="left:932px;top:792px;font-size:11px;line-height:16px;color:#e4e4e4;white-space:nowrap">Z:</div>
<div class="abs" style="left:942px;top:790px;width:56px;height:20px;background:#565656;border-top:2px solid #0c0c0c;border-left:2px solid #0c0c0c;border-right:1px solid #333;color:#000;font-size:11px;line-height:18px;padding-left:2px;white-space:nowrap">0.0</div>
<div class="abs" style="left:1014px;top:789px;width:100px;height:20px;background:#444;border-top:2px solid #1a1a1a;border-left:2px solid #1a1a1a;border-right:1px solid #303030;color:#e4e4e4;font-size:12px;line-height:20px;padding-left:4px;white-space:nowrap">栅格 = 10.0</div>
<div class="abs" style="left:1118px;top:788px;width:40px;height:20px;background:#4a4a4a;border-left:1px solid #2a2a2a;border-right:1px solid #2a2a2a"></div>
<div class="abs" style="left:1129px;top:803px;width:5px;height:5px;border-radius:3px;background:#0a0a0a"></div>
<div class="abs" style="left:1160px;top:788px;width:65px;height:20px;background:#444;border:1px solid #2e2e2e;color:#e8e8e8;font-size:12px;line-height:22px;text-align:center;white-space:nowrap">自动关键点</div>
<div class="abs" style="left:1230px;top:790px;width:120px;height:20px;background:linear-gradient(#ffffff,#d8d8d8);border-top:1px solid #111;border-left:1px solid #111;color:#000;font-size:12px;line-height:18px;padding-left:2px;white-space:nowrap">选定对象</div>
<div class="abs" style="left:1337px;top:796px;width:0;height:0;border-left:4px solid transparent;border-right:4px solid transparent;border-top:5px solid #000"></div>
<div class="abs" style="left:1352px;top:788px;width:1px;height:20px;background:#2a2a2a"></div>
<div class="abs" style="left:1379px;top:788px;width:1px;height:20px;background:#2a2a2a"></div>
<div class="abs" style="left:1451px;top:788px;width:1px;height:20px;background:#2a2a2a"></div>
<div class="abs" style="left:1480px;top:788px;width:1px;height:20px;background:#2a2a2a"></div>
<svg class="abs" style="left:0;top:785px" width="1533" height="22" viewBox="0 785 1533 22">
<g fill="none" stroke="#e8e8e8" stroke-width="1.2">
<path d="M1358.6 791.4 V806 M1373.4 791.4 V806"/><path d="M1359.6 798.8 L1365.6 794.6 V803Z M1372.4 798.8 L1366.4 794.6 V803Z"/>
<path d="M1385 798.8 L1391 794.6 V803Z"/><path d="M1393.6 793.6 V804 M1396.4 793.6 V804 M1399.2 793.6 V804" stroke-width="1.5"/>
<path d="M1410.6 793.8 L1419.6 798.8 L1410.6 803.8Z"/>
<path d="M1445.8 798.8 L1439.8 794.6 V803Z"/><path d="M1431.4 793.6 V804 M1434.2 793.6 V804 M1437 793.6 V804" stroke-width="1.5"/>
<path d="M1457 791.4 V806 M1471.8 791.4 V806"/><path d="M1464 798.8 L1458 794.6 V803Z M1470.8 798.8 L1464.8 794.6 V803Z"/>
</g>
<circle cx="1490" cy="797.4" r="3.6" fill="#dce8e8"/><path d="M1492.6 800.4 L1497 805" stroke="#a8a8a8" stroke-width="2"/><path d="M1497 792.6 h3.4 M1498.7 791 v3.2 M1497 796.4 h3.4" stroke="#e8e8e8" stroke-width=".9"/>
<g fill="#dcdce0"><rect x="1510" y="792.6" width="5" height="5"/><rect x="1516.4" y="792.6" width="5" height="5"/><rect x="1510" y="799" width="5" height="5"/><circle cx="1519" cy="801.6" r="2.6"/></g><path d="M1520.8 803.6 L1524 806.6" stroke="#a8a8a8" stroke-width="1.4"/>
<path d="M1531 790.6 h3 M1532.5 790.6 v6" stroke="#e8e8e8" stroke-width="1"/>
<rect x="719.8" y="798.4" width="9.4" height="6.8" fill="#c4c4c4"/><path d="M721.6 798.4 V796.2 A2.9 2.9 0 0 1 727.4 796.2 V798.4" fill="none" stroke="#c4c4c4" stroke-width="1.3"/><rect x="723.8" y="800" width="1.4" height="3" fill="#666"/>
<rect x="745" y="792.2" width="13" height="13" fill="#f4f4f8"/><circle cx="751.5" cy="798.7" r="3.4" fill="#f4f4f8" stroke="#505868" stroke-width="1.2"/><path d="M751.5 792.2 V795 M751.5 802.4 V805.2 M745 798.7 H747.8 M755.2 798.7 H758" stroke="#505868" stroke-width="1.2"/>
</svg>
<!--/BOTTOM-->
<!--WATERMARK-->
<div class="abs" style="left:1211px;top:760px;font-family:'Liberation Sans','Noto Sans CJK SC',sans-serif;font-weight:400;font-size:30.6px;line-height:40px;color:#eeeeee;white-space:nowrap;text-shadow:1px 1px 1px rgba(40,40,40,.7);letter-spacing:0px" id="wm">头条号 / 设计师随口说</div>
<!--/WATERMARK-->
</body>
</html>
